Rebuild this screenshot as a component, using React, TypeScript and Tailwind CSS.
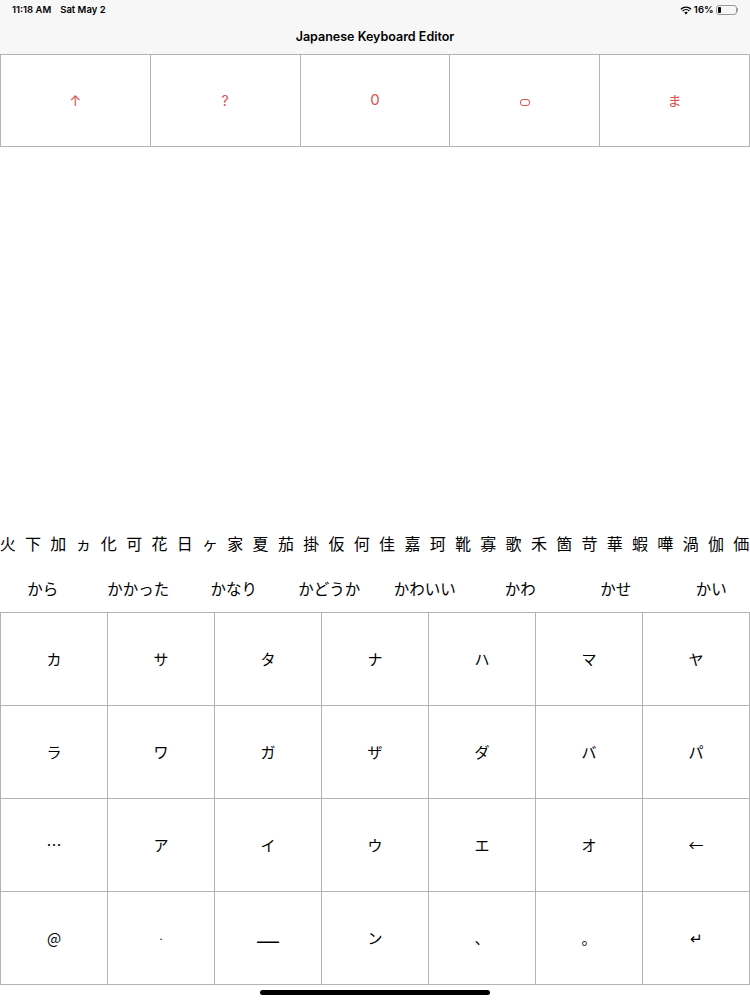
import React from "react";

const topKeys = ["↑", "?", "0", "box", "ま"];

const kanji = [
  "火", "下", "加", "ヵ", "化", "可", "花", "日", "ヶ", "家", "夏", "茄", "掛", "仮", "何",
  "佳", "嘉", "珂", "靴", "寡", "歌", "禾", "箇", "苛", "華", "蝦", "嘩", "渦", "伽", "価",
];

const words = ["から", "かかった", "かなり", "かどうか", "かわいい", "かわ", "かせ", "かい"];

const keys = [
  "カ", "サ", "タ", "ナ", "ハ", "マ", "ヤ",
  "ラ", "ワ", "ガ", "ザ", "ダ", "バ", "パ",
  "…", "ア", "イ", "ウ", "エ", "オ", "←",
  "@", "·", "—", "ン", "、", "。", "↵",
];

function StatusBar() {
  return (
    <div className="h-[20px] flex items-center justify-between px-[12px] text-[9.5px] font-semibold text-black">
      <div className="flex gap-[9px]">
        <span>11:18 AM</span>
        <span>Sat May 2</span>
      </div>
      <div className="flex items-center gap-[2px]">
        <svg width="12" height="9" viewBox="0 0 12 9">
          <path d="M6 8.5 L4.2 6.6 A2.6 2.6 0 0 1 7.8 6.6 Z" fill="#000" />
          <path d="M2.6 5 A4.9 4.9 0 0 1 9.4 5" stroke="#000" strokeWidth="1.3" fill="none" />
          <path d="M0.9 3.2 A7.3 7.3 0 0 1 11.1 3.2" stroke="#000" strokeWidth="1.3" fill="none" />
        </svg>
        <span>16%</span>
        <div className="flex items-center">
          <div className="w-[21px] h-[10px] rounded-[3px] border border-[#999] p-[1px]">
            <div className="w-[3px] h-full bg-black rounded-[1px]" />
          </div>
          <div className="w-[1.5px] h-[4px] bg-[#999] rounded-r" />
        </div>
      </div>
    </div>
  );
}

export default function App() {
  return (
    <div
      className="w-[750px] h-[1000px] bg-white flex flex-col overflow-hidden"
      style={{ fontFamily: "Inter, 'Noto Sans CJK JP', sans-serif" }}
    >
      <div className="bg-[#f7f7f8]">
        <StatusBar />
        <div className="h-[34px] flex items-center justify-center text-[12.5px] font-semibold text-black">
          Japanese Keyboard Editor
        </div>
      </div>

      <div className="grid grid-cols-5 gap-px bg-[#b3b3b3] p-px h-[93px]">
        {topKeys.map((k) => (
          <div key={k} className="bg-white flex items-center justify-center text-[14px] text-[#e0504c]">
            {k === "box" ? (
              <span className="mt-[4px] w-[10px] h-[7px] rounded-[3px] border-[1.5px] border-[#e0504c]" />
            ) : (
              <span className={k === "0" ? "text-[15px]" : ""}>{k}</span>
            )}
          </div>
        ))}
      </div>

      <div className="h-[373px]" />

      <div
        className="h-[46px] flex items-center overflow-hidden ml-[-5px] text-[16px] text-black"
        style={{ fontFamily: "'Noto Sans CJK JP', sans-serif" }}
      >
        {kanji.map((c, i) => (
          <span key={i} className="w-[25.3px] shrink-0 text-center">
            {c}
          </span>
        ))}
      </div>

      <div
        className="h-[46px] flex items-center overflow-hidden ml-[-5px] text-[15.5px] text-black"
        style={{ fontFamily: "'Noto Sans CJK JP', sans-serif" }}
      >
        {words.map((w) => (
          <span key={w} className="w-[95.5px] shrink-0 text-center">
            {w}
          </span>
        ))}
      </div>

      <div
        className="grid grid-cols-7 grid-rows-4 gap-px bg-[#b3b3b3] p-px h-[373px]"
        style={{ fontFamily: "'Noto Sans CJK JP', sans-serif" }}
      >
        {keys.map((k, i) => (
          <div key={i} className="bg-white flex items-center justify-center text-[15px] text-black">
            {k === "—" ? (
              <span className="mt-[6px] text-[22px] leading-none" style={{ fontFamily: "'Liberation Sans', sans-serif" }}>
                {k}
              </span>
            ) : k === "·" ? (
              <span className="text-[10px]">{k}</span>
            ) : (
              k
            )}
          </div>
        ))}
      </div>

      <div className="flex-1 flex items-center justify-center">
        <div className="w-[230px] h-[5px] rounded-full bg-black" />
      </div>
    </div>
  );
}
